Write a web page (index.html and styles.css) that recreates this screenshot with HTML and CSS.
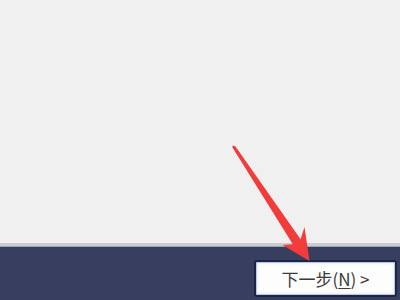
FILE: index.html
```html
<!DOCTYPE html>
<html lang="zh-CN">
<head>
<meta charset="utf-8">
<link rel="stylesheet" href="styles.css">
</head>
<body>
<div class="page">
  <div class="content"></div>
  <div class="sep-gray"></div>
  <div class="sep-light"></div>
  <div class="footer">
    <button class="next-btn">下一步(<span class="key">N</span>) &gt;</button>
  </div>
  <svg class="arrow" width="400" height="300" viewBox="0 0 400 300">
    <polygon points="233,145.5 235.5,146.5 300.6,239.2 304.5,227 309.5,261 282.5,245 292.8,244.3 232.2,147" fill="#f23b3b"/>
  </svg>
</div>
</body>
</html>
```
FILE: styles.css
```css
html, body {
  margin: 0;
  padding: 0;
}
body {
  width: 400px;
  height: 300px;
  overflow: hidden;
  font-family: "Noto Sans CJK SC", "Noto Sans", sans-serif;
}
.page {
  position: relative;
  width: 400px;
  height: 300px;
  display: flex;
  flex-direction: column;
}
.content {
  height: 243px;
  background: #f0f0f0;
}
.sep-gray {
  height: 3px;
  background: #c9cbcc;
}
.sep-light {
  height: 1px;
  background: #9aa0bd;
}
.footer {
  flex: 1;
  background: #373e5e;
  display: flex;
  justify-content: flex-end;
  align-items: flex-start;
  padding: 13px 3px 0 0;
}
.next-btn {
  box-sizing: border-box;
  width: 143px;
  height: 37px;
  background: #fdfdfd;
  border: 2px solid #1d2547;
  border-radius: 3px;
  box-shadow: inset 0 0 0 1px #b7c8e4, inset 0 0 3px 1px #dbe6f4;
  font-family: "Noto Sans CJK SC", "Noto Sans", sans-serif;
  font-size: 17px;
  color: #3a3a3a;
  padding: 0;
  display: flex;
  align-items: center;
  justify-content: center;
}
.key {
  text-decoration: underline;
  text-underline-offset: 2px;
}
.arrow {
  position: absolute;
  left: 0;
  top: 0;
  pointer-events: none;
}
```
